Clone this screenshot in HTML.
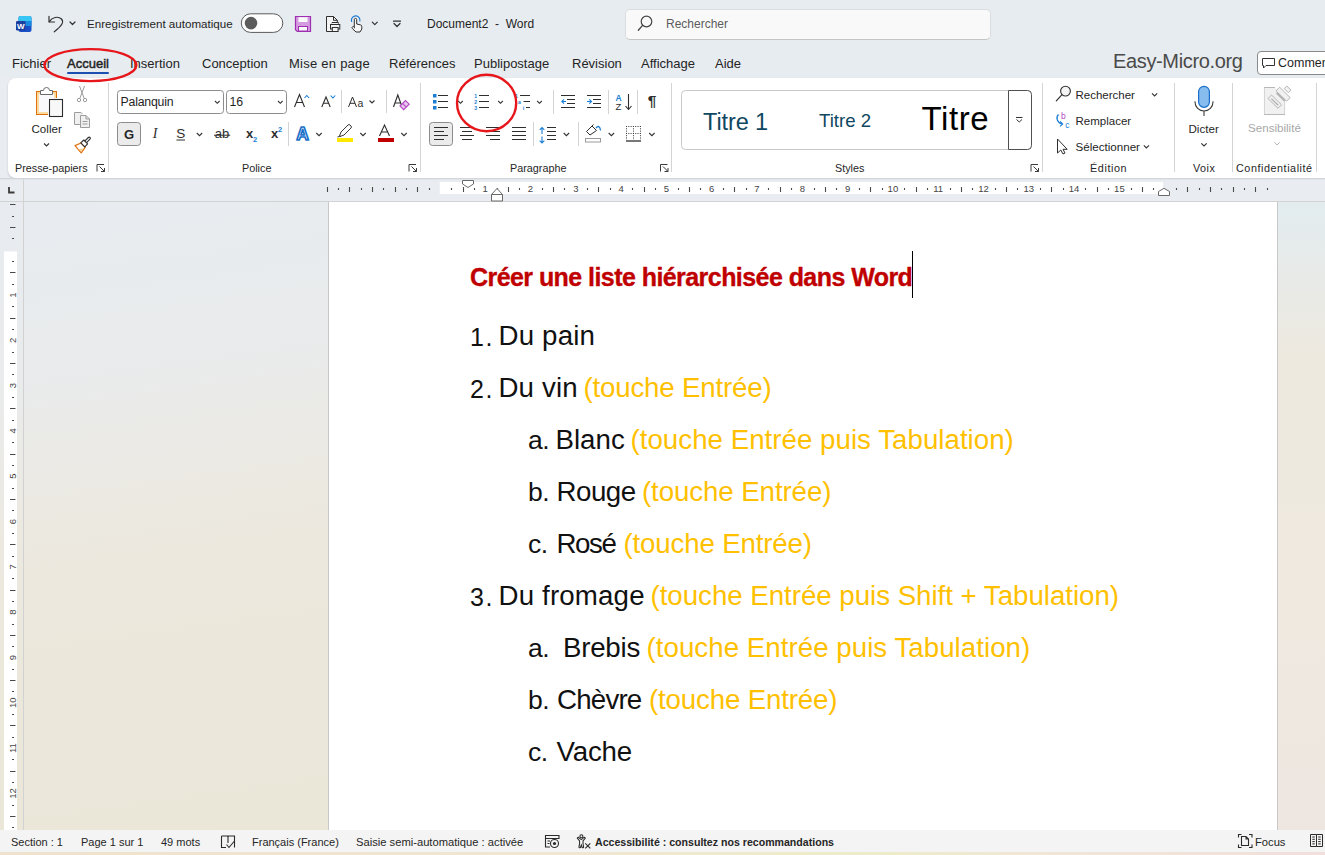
<!DOCTYPE html>
<html><head><meta charset="utf-8">
<style>
*{box-sizing:border-box;margin:0;padding:0}
html,body{width:1325px;height:855px;overflow:hidden;background:#e9edf2;font-family:"Liberation Sans",sans-serif;color:#1f1f1f}
.a{position:absolute;white-space:pre}
svg{position:absolute;overflow:visible}
#titlebar{position:absolute;left:0;top:0;width:1325px;height:78px;background:#e7ecf0}
#ribbon{position:absolute;left:8px;top:78px;width:1330px;height:100px;background:#fff;border-radius:8px;box-shadow:0 1px 2px rgba(0,0,0,.18)}
#ruler{position:absolute;left:0;top:178px;width:1325px;height:24px;background:#e9ecf0}
#doc{position:absolute;left:0;top:202px;width:1325px;height:628px;background:linear-gradient(172deg,#e8ecf0 0%,#e9ebec 22%,#ece9e1 40%,#ebe7da 60%,#e9e5d6 100%)}
#docr{position:absolute;left:1277px;top:202px;width:48px;height:628px;background:linear-gradient(180deg,#e2ecef 0%,#e8eae8 12%,#ede9df 25%,#efe9e0 60%,#eee7e1 100%)}
#page{position:absolute;left:328px;top:202px;width:950px;height:628px;background:#fff;border-left:1px solid #c8c8c8;border-right:1px solid #c8c8c8}
#status{position:absolute;left:0;top:830px;width:1325px;height:22px;background:#f4f4f4;font-size:11px;color:#262626}
#bottomstrip{position:absolute;left:0;top:852px;width:1325px;height:3px;background:linear-gradient(90deg,#efe2cc 0%,#efe7d0 45%,#eeecc8 65%,#f0e6d8 80%,#f1dfdc 100%)}
.tab{position:absolute;top:56px;font-size:13px;color:#242424}
.lbl{position:absolute;top:162px;font-size:10.8px;color:#262626}
.sep{position:absolute;width:1px;background:#d6d6d6}
.doc{position:absolute;font-size:27.7px;color:#111;white-space:pre;line-height:32px}
.or{color:#ffc000}
</style></head><body>
<div id="titlebar"></div>
<div id="ribbon"></div>
<div id="ruler"></div>
<div id="doc"></div>
<div id="docr"></div>
<div id="page"></div>
<div id="status"></div>
<div id="bottomstrip"></div>

<!-- ruler -->
<svg width="1325" height="855" style="left:0;top:0">
<rect x="439.7" y="182" width="723.4" height="12" fill="#fff"/>
<rect x="4" y="251.5" width="13" height="578.5" fill="#fff"/>
<path d="M0 201.5 H1325 M23.5 178 V830" stroke="#d2d2d2" stroke-width="1"/>
<rect x="0" y="178" width="1325" height="3" fill="url(#sh)"/>
<defs><linearGradient id="sh" x1="0" y1="0" x2="0" y2="1"><stop offset="0" stop-color="#c9ccd0"/><stop offset="1" stop-color="#e9ecf0" stop-opacity="0"/></linearGradient></defs>
<path d="M9 187 V192.5 H14.5" fill="none" stroke="#3a3a3a" stroke-width="1.8"/>
<path d="M327.5 187 V192 M338.5 188 V190 M349.5 187 V192 M361.5 188 V190 M372.5 187 V192 M383.5 188 V190 M395.5 187 V192 M406.5 188 V190 M417.5 187 V192 M429.5 188 V190 M451.5 188 V190 M463.5 187 V192 M474.5 188 V190 M497.5 188 V190 M508.5 187 V192 M519.5 188 V190 M542.5 188 V190 M553.5 187 V192 M564.5 188 V190 M587.5 188 V190 M598.5 187 V192 M610.5 188 V190 M632.5 188 V190 M644.5 187 V192 M655.5 188 V190 M678.5 188 V190 M689.5 187 V192 M700.5 188 V190 M723.5 188 V190 M734.5 187 V192 M746.5 188 V190 M768.5 188 V190 M780.5 187 V192 M791.5 188 V190 M814.5 188 V190 M825.5 187 V192 M836.5 188 V190 M859.5 188 V190 M870.5 187 V192 M882.5 188 V190 M904.5 188 V190 M916.5 187 V192 M927.5 188 V190 M950.5 188 V190 M961.5 187 V192 M972.5 188 V190 M995.5 188 V190 M1006.5 187 V192 M1017.5 188 V190 M1040.5 188 V190 M1051.5 187 V192 M1063.5 188 V190 M1085.5 188 V190 M1097.5 187 V192 M1108.5 188 V190 M1131.5 188 V190 M1142.5 187 V192 M1153.5 188 V190 M1176.5 188 V190 M1187.5 187 V192 M1199.5 188 V190 M1210.5 187 V192 M1221.5 188 V190 M1233.5 187 V192 M1244.5 188 V190 M1255.5 187 V192 M1267.5 188 V190" stroke="#4a4a4a" stroke-width="1.1"/>
<g font-family="Liberation Sans" font-size="9.5" fill="#454545"><text x="485.2" y="192" text-anchor="middle">1</text><text x="530.5" y="192" text-anchor="middle">2</text><text x="575.8" y="192" text-anchor="middle">3</text><text x="621.1" y="192" text-anchor="middle">4</text><text x="666.4" y="192" text-anchor="middle">5</text><text x="711.7" y="192" text-anchor="middle">6</text><text x="757.0" y="192" text-anchor="middle">7</text><text x="802.3" y="192" text-anchor="middle">8</text><text x="847.6" y="192" text-anchor="middle">9</text><text x="892.9" y="192" text-anchor="middle">10</text><text x="938.2" y="192" text-anchor="middle">11</text><text x="983.5" y="192" text-anchor="middle">12</text><text x="1028.8" y="192" text-anchor="middle">13</text><text x="1074.1" y="192" text-anchor="middle">14</text><text x="1119.4" y="192" text-anchor="middle">15</text></g>
<path d="M10 204.5 H15.5 M12 216.5 H14 M10 227.5 H15.5 M12 238.5 H14 M12 261.5 H14 M10 272.5 H15.5 M12 284.5 H14 M12 306.5 H14 M10 318.5 H15.5 M12 329.5 H14 M12 352.5 H14 M10 363.5 H15.5 M12 374.5 H14 M12 397.5 H14 M10 408.5 H15.5 M12 420.5 H14 M12 442.5 H14 M10 454.5 H15.5 M12 465.5 H14 M12 488.5 H14 M10 499.5 H15.5 M12 510.5 H14 M12 533.5 H14 M10 544.5 H15.5 M12 556.5 H14 M12 578.5 H14 M10 590.5 H15.5 M12 601.5 H14 M12 624.5 H14 M10 635.5 H15.5 M12 646.5 H14 M12 669.5 H14 M10 680.5 H15.5 M12 691.5 H14 M12 714.5 H14 M10 725.5 H15.5 M12 737.5 H14 M12 759.5 H14 M10 771.5 H15.5 M12 782.5 H14 M12 805.5 H14 M10 816.5 H15.5 M12 827.5 H14" stroke="#4a4a4a" stroke-width="1.1"/>
<g font-family="Liberation Sans" font-size="9.5" fill="#454545"><text transform="translate(16 295.0) rotate(-90)" x="0" y="0" text-anchor="middle">1</text><text transform="translate(16 340.3) rotate(-90)" x="0" y="0" text-anchor="middle">2</text><text transform="translate(16 385.6) rotate(-90)" x="0" y="0" text-anchor="middle">3</text><text transform="translate(16 430.9) rotate(-90)" x="0" y="0" text-anchor="middle">4</text><text transform="translate(16 476.2) rotate(-90)" x="0" y="0" text-anchor="middle">5</text><text transform="translate(16 521.6) rotate(-90)" x="0" y="0" text-anchor="middle">6</text><text transform="translate(16 566.9) rotate(-90)" x="0" y="0" text-anchor="middle">7</text><text transform="translate(16 612.2) rotate(-90)" x="0" y="0" text-anchor="middle">8</text><text transform="translate(16 657.5) rotate(-90)" x="0" y="0" text-anchor="middle">9</text><text transform="translate(16 702.8) rotate(-90)" x="0" y="0" text-anchor="middle">10</text><text transform="translate(16 748.1) rotate(-90)" x="0" y="0" text-anchor="middle">11</text><text transform="translate(16 793.4) rotate(-90)" x="0" y="0" text-anchor="middle">12</text></g>
<path d="M462.5 180.5 H473.5 V184 L468 187.5 L462.5 184 Z" fill="#fff" stroke="#6a6a6a" stroke-width="1"/>
<path d="M491.5 194.5 L497 188.5 L502.5 194.5 V201 H491.5 Z M491.5 194.5 H502.5" fill="#fff" stroke="#6a6a6a" stroke-width="1"/>
<path d="M1158.5 195.5 V191.5 L1164 188.3 L1169.5 191.5 V195.5 Z" fill="#fff" stroke="#6a6a6a" stroke-width="1"/>
</svg>
<!-- title bar text -->
<div class="a" style="left:87px;top:17px;font-size:11.6px;color:#1f1f1f">Enregistrement automatique</div>
<div class="a" style="left:427px;top:17px;font-size:12px;color:#1f1f1f">Document2  -  Word</div>
<div class="a" style="left:625px;top:9px;width:366px;height:31px;background:#f9f9f9;border:1px solid #dcdcdc;border-bottom-color:#c4c4c4;border-radius:5px"></div>
<div class="a" style="left:666px;top:17px;font-size:12px;color:#5c5c5c">Rechercher</div>

<!-- tabs -->
<div class="tab" style="left:12px">Fichier</div>
<div class="tab" style="left:67px;-webkit-text-stroke:0.45px #242424">Accueil</div>
<div class="a" style="left:67px;top:72px;width:42px;height:2px;background:#1b4fb0;border-radius:1px"></div>
<div class="tab" style="left:130px">Insertion</div>
<div class="tab" style="left:202px">Conception</div>
<div class="tab" style="left:289px;letter-spacing:0.25px">Mise en page</div>
<div class="tab" style="left:389px">Références</div>
<div class="tab" style="left:474px">Publipostage</div>
<div class="tab" style="left:572px">Révision</div>
<div class="tab" style="left:641px">Affichage</div>
<div class="tab" style="left:715px">Aide</div>
<div class="a" style="left:1113px;top:50px;font-size:20px;letter-spacing:-0.35px;color:#4a4a4a">Easy-Micro.org</div>
<div class="a" style="left:1257px;top:51px;width:80px;height:24px;background:#fff;border:1px solid #8a8a8a;border-radius:4px"></div>
<div class="a" style="left:1278px;top:56px;font-size:12.5px;color:#1f1f1f">Commentaires</div>

<!-- group labels -->
<div class="lbl" style="left:15px">Presse-papiers</div>
<div class="lbl" style="left:242px">Police</div>
<div class="lbl" style="left:510px">Paragraphe</div>
<div class="lbl" style="left:835px">Styles</div>
<div class="lbl" style="left:1090px;letter-spacing:0.6px">Édition</div>
<div class="lbl" style="left:1193px;letter-spacing:0.5px">Voix</div>
<div class="lbl" style="left:1236px;letter-spacing:0.55px">Confidentialité</div>


<svg width="1325" height="855" style="left:0;top:0">
<!-- word icon -->
<rect x="18.5" y="16" width="13" height="16" rx="2" fill="#1950c8"/>
<path d="M18.5 21 V18 a2 2 0 0 1 2 -2 H29.5 a2 2 0 0 1 2 2 V21 Z" fill="#37c6f4"/>
<rect x="18.5" y="21" width="13" height="5" fill="#1a8ae0"/>
<rect x="16" y="21" width="9.5" height="9.5" rx="1.3" fill="#1c3f9e"/>
<text x="20.7" y="28.6" font-family="Liberation Sans" font-weight="bold" font-size="8" fill="#fff" text-anchor="middle">W</text>
<!-- undo -->
<g fill="none" stroke="#303030" stroke-width="1.2" stroke-linecap="round" stroke-linejoin="round">
<path d="M49 16.3 V22 H54.5"/>
<path d="M49.4 21.6 C 52 17.3, 58 15.8, 61.5 19 C 64 21.8, 62.5 25.5, 54.3 31.8"/>
<path d="M70 22 L72.5 24.5 L75 22"/>
<path d="M372.3 22.2 L374.8 24.7 L377.3 22.2"/>
<path d="M393.5 21.2 H400.5 M394 23.5 L397 26.5 L400 23.5"/>
</g>
<!-- toggle -->
<rect x="241.3" y="13.8" width="41.5" height="18.6" rx="9.3" fill="#fff" stroke="#5a5a5a" stroke-width="1"/>
<circle cx="251" cy="23.1" r="6.3" fill="#5c5c5c"/>
<!-- save -->
<path d="M295.5 16.5 H310.5 V31.5 H297.3 L295.5 29.7 Z" fill="#d59be0" stroke="#9e2fb0" stroke-width="1.2"/>
<rect x="298.5" y="17.2" width="9" height="4.8" fill="#fafafa"/>
<rect x="298.5" y="26.5" width="9" height="4.5" fill="#fafafa" stroke="#9e2fb0" stroke-width="1"/>
<!-- print preview -->
<g fill="none" stroke="#2e2e2e" stroke-width="1">
<path d="M333 31.5 H326.5 V16.5 H333.5 L337.3 20.3 V23" fill="#f4f4f4"/>
<path d="M333.5 16.5 V20.3 H337.3"/>
<rect x="330.5" y="24.5" width="9.3" height="4.5" fill="#f4f4f4"/>
<rect x="332.3" y="22.5" width="5.8" height="2"/>
<rect x="332.3" y="27.5" width="5.8" height="4" fill="#f4f4f4"/>
</g>
<!-- touch -->
<path d="M351.8 22 A4.3 4.3 0 1 1 359.8 21.5" fill="none" stroke="#1a78d0" stroke-width="1.2"/>
<path d="M354.3 28.3 V19.6 a1.2 1.2 0 0 1 2.4 0 V24 l3.5 0.8 a1.8 1.8 0 0 1 1.6 2 V29 L360 32 H356 L352.3 28.5 a1 1 0 0 1 2 -1.5" fill="#f6f6f6" stroke="#303030" stroke-width="1"/>
<!-- search -->
<circle cx="646.5" cy="21.5" r="5.3" fill="none" stroke="#444" stroke-width="1.2"/>
<path d="M642.6 25.4 L638.3 30.3" stroke="#444" stroke-width="1.3" stroke-linecap="round"/>
</svg>


<svg width="1325" height="855" style="left:0;top:0">
<!-- separators -->
<g stroke="#d4d4d4" stroke-width="1">
<path d="M108.5 83 V172 M420.5 83 V172 M671.5 83 V172 M1042.5 83 V172 M1174.5 83 V172 M1232.5 83 V172 M1316.5 83 V172"/>
<path d="M341.5 90 V113 M386.5 90 V113 M288.5 122 V146 M553.5 90 V114 M608.5 90 V114 M637.5 90 V114 M533.5 122 V146 M578.5 122 V146"/>
</g>
<!-- launchers -->
<g fill="none" stroke="#3a3a3a" stroke-width="1">
<path d="M97 171.5 V164.5 H104 M99.5 166.5 L104.5 171.5 M101 171.5 H104.5 V168"/>
<path d="M409 171.5 V164.5 H416 M411.5 166.5 L416.5 171.5 M413 171.5 H416.5 V168"/>
<path d="M660.5 171.5 V164.5 H667.5 M663 166.5 L668 171.5 M664.5 171.5 H668 V168"/>
<path d="M1031 171.5 V164.5 H1038 M1033.5 166.5 L1038.5 171.5 M1035 171.5 H1038.5 V168"/>
</g>
<!-- paste -->
<rect x="36.6" y="91.6" width="19.8" height="22.8" fill="#f9f9fb" stroke="#e0700e" stroke-width="1.2"/>
<rect x="38" y="93" width="17" height="20" fill="none" stroke="#fcd68e" stroke-width="1.6"/>
<rect x="39" y="94" width="15" height="18" fill="#f9f9fb"/>
<path d="M40.5 94.5 V90.5 H43.5 A3 3 0 0 1 49.5 90.5 H52.5 V94.5 Z" fill="#fff" stroke="#6a6a6a"/>
<rect x="48" y="98" width="16" height="20" fill="#fff"/>
<rect x="49.5" y="99.5" width="13" height="17" fill="#f8f8f8" stroke="#2b2b2b" stroke-width="1.1"/>
<path d="M44 143.5 L46.5 146 L49 143.5" fill="none" stroke="#333" stroke-width="1.1"/>
<!-- scissors -->
<g fill="none" stroke="#9c9c9c" stroke-width="1">
<path d="M79.5 86 L84 98 M84.5 86 L80 98"/>
<circle cx="79" cy="100" r="1.7"/><circle cx="85" cy="100" r="1.7"/>
</g>
<!-- copy -->
<g fill="#f0f0f0" stroke="#9c9c9c" stroke-width="1">
<path d="M80.5 124.5 H74.5 V112.5 H81 L82.5 114"/>
<path d="M80.5 115.5 H86 L89.5 119 V127.5 H80.5 Z"/>
<path d="M86 115.5 V119 H89.5 M82.5 121.5 H87.5 M82.5 124 H87.5" fill="none"/>
</g>
<!-- format painter -->
<path d="M75 145.6 L81 143 L85.2 147.3 L81.2 152.8 Z" fill="#fff" stroke="#e0700e" stroke-width="1.2" stroke-linejoin="round"/>
<path d="M78.3 149.3 L83.6 148.2 L81.3 151.6 Z" fill="#fcd68e"/>
<path d="M85 142.5 L89.2 138.3" stroke="#2e2e2e" stroke-width="3.4" stroke-linecap="round"/>
<path d="M85 142.5 L89.2 138.3" stroke="#fff" stroke-width="1.2" stroke-linecap="round"/>
<path d="M80.8 142.8 L83.8 140 L87.6 143.8 L84.8 146.8 Z" fill="#fff" stroke="#2e2e2e" stroke-width="1.1" stroke-linejoin="round"/>
<!-- font boxes -->
<rect x="117.5" y="90.5" width="106" height="23" rx="3" fill="#fff" stroke="#8d8d8d"/>
<rect x="226.5" y="90.5" width="60" height="23" rx="3" fill="#fff" stroke="#8d8d8d"/>
<g fill="none" stroke="#333" stroke-width="1.1">
<path d="M215 101 L217.3 103.3 L219.6 101"/>
<path d="M278 101 L280.3 103.3 L282.6 101"/>
<path d="M369.5 100.5 L372 103 L374.5 100.5"/>
<path d="M196.8 133 L199.5 135.7 L202.2 133"/>
<path d="M316.3 133 L319 135.7 L321.7 133"/>
<path d="M360.3 133 L363 135.7 L365.7 133"/>
<path d="M401.3 133 L404 135.7 L406.7 133"/>
</g>
<text x="120.5" y="106" font-family="Liberation Sans" font-size="12.3" letter-spacing="-0.2" fill="#1f1f1f">Palanquin</text>
<text x="229.5" y="106" font-family="Liberation Sans" font-size="12.3" fill="#1f1f1f">16</text>
<!-- grow/shrink -->
<g fill="none" stroke="#2e2e2e" stroke-width="1.1">
<path d="M294.5 107 L299.5 94.5 L304.5 107 M296.3 102.5 H302.7"/>
<path d="M321.8 107 L326 97 L330.2 107 M323.4 103.3 H328.6"/>
</g>
<g fill="none" stroke="#1a7fd4" stroke-width="1.1">
<path d="M304.5 98 L306.8 95.5 L309.1 98"/>
<path d="M330.6 95.5 L332.9 98 L335.2 95.5"/>
</g>
<path d="M348.5 107 L352.5 97 L356.5 107 M350 103.3 H355" fill="none" stroke="#2e2e2e" stroke-width="1"/>
<text x="357.5" y="107" font-family="Liberation Sans" font-size="10.5" fill="#2e2e2e">a</text>
<path d="M393.5 107 L397.8 95 L402.1 107 M395 103 H400.6" fill="none" stroke="#2e2e2e" stroke-width="1.1"/>
<path d="M400 106 L405.5 100.5 L409.2 104.2 L403.7 109.7 Z M402.6 103.4 L406.3 107.1" fill="#e9c8ef" stroke="#b146c2" stroke-width="1.1"/>
<!-- G button -->
<rect x="117.5" y="122.5" width="23" height="23" rx="3" fill="#ebebeb" stroke="#8c8c8c"/>
<text x="129" y="139" font-family="Liberation Sans" font-weight="bold" font-size="13" fill="#262626" text-anchor="middle">G</text>
<text x="155" y="138.3" font-family="Liberation Serif" font-style="italic" font-size="14" fill="#2e2e2e" text-anchor="middle">I</text>
<text x="180.8" y="138.3" font-family="Liberation Sans" font-size="13.5" fill="#2e2e2e" text-anchor="middle">S</text>
<path d="M176.5 140 H185" stroke="#2e2e2e" stroke-width="1"/>
<text x="222" y="138.3" font-family="Liberation Sans" font-size="13" fill="#2e2e2e" text-anchor="middle">ab</text>
<path d="M214 135.2 H230.2" stroke="#2e2e2e" stroke-width="1"/>
<text x="249.5" y="138.3" font-family="Liberation Sans" font-weight="bold" font-size="13" fill="#2e2e2e" text-anchor="middle">x</text>
<text x="255" y="142.3" font-family="Liberation Sans" font-weight="bold" font-size="7.5" fill="#1a7fd4" text-anchor="middle">2</text>
<text x="274.5" y="138.3" font-family="Liberation Sans" font-weight="bold" font-size="13" fill="#2e2e2e" text-anchor="middle">x</text>
<text x="280" y="132.3" font-family="Liberation Sans" font-weight="bold" font-size="7.5" fill="#1a7fd4" text-anchor="middle">2</text>
<!-- text effects -->
<text x="302.6" y="140" font-family="Liberation Sans" font-weight="bold" font-size="17.5" fill="#dbeafa" stroke="#1a6fc9" stroke-width="1.6" stroke-linejoin="round" text-anchor="middle">A</text>
<!-- highlighter -->
<path d="M339.5 136 L341 132 L348 125 a1.4 1.4 0 0 1 2 0 L351 126 a1.4 1.4 0 0 1 0 2 L344 135 L340 136.5 Z" fill="#fff" stroke="#3a3a3a" stroke-width="1"/>
<path d="M337.5 137 L340.5 136" stroke="#3a3a3a" stroke-width="1"/>
<rect x="337" y="138" width="16" height="4" fill="#ffe800"/>
<!-- font color -->
<path d="M379.5 136 L384.5 125 L389.5 136 M381.2 132 H387.8" fill="none" stroke="#2e2e2e" stroke-width="1.1"/>
<rect x="378" y="138" width="16" height="4" fill="#c00000"/>
</svg>


<svg width="1325" height="855" style="left:0;top:0">
<text x="31.5" y="132.8" font-family="Liberation Sans" font-size="11.6" fill="#262626">Coller</text>
<!-- bullets -->
<g fill="#1a7fd4">
<rect x="433" y="94" width="3.5" height="3.5"/><rect x="433" y="100" width="3.5" height="3.5"/><rect x="433" y="106" width="3.5" height="3.5"/>
</g>
<g stroke="#2e2e2e" stroke-width="1" fill="none">
<path d="M438 95.5 H448 M438 101.5 H448 M438 107.5 H448"/>
<path d="M479 95.5 H489 M479 101.5 H489 M479 107.5 H489"/>
<path d="M520 95.5 H530 M523.5 101.5 H530 M526 107.5 H530"/>
<path d="M561 95.5 H575 M567 99.5 H575 M567 103.5 H575 M561 107.5 H575"/>
<path d="M587 95.5 H601 M593 99.5 H601 M593 103.5 H601 M587 107.5 H601"/>
<path d="M434 127.5 H448 M434 131.5 H444 M434 135.5 H448 M434 139.5 H444" />
<path d="M460 127.5 H474 M462 131.5 H472 M460 135.5 H474 M462 139.5 H472"/>
<path d="M486 127.5 H500 M490 131.5 H500 M486 135.5 H500 M490 139.5 H500"/>
<path d="M512 127.5 H526 M512 131.5 H526 M512 135.5 H526 M512 139.5 H526"/>
<path d="M547 127.5 H556 M547 131.5 H556 M547 135.5 H556 M547 139.5 H556"/>
</g>
<g fill="none" stroke="#333" stroke-width="1.1">
<path d="M458.2 101 L460.5 103.3 L462.8 101"/>
<path d="M498.2 101 L500.5 103.3 L502.8 101"/>
<path d="M537.2 101 L539.5 103.3 L541.8 101"/>
<path d="M563.7 133 L566.4 135.7 L569.1 133"/>
<path d="M608.7 133 L611.4 135.7 L614.1 133"/>
<path d="M649.2 133 L651.9 135.7 L654.6 133"/>
<path d="M1152 93.3 L1154.6 95.9 L1157.2 93.3"/>
<path d="M1143.8 145.3 L1146.4 147.9 L1149 145.3"/>
<path d="M1201.3 143.3 L1204 146 L1206.7 143.3"/>
</g>
<g font-family="Liberation Sans" font-weight="bold" font-size="5.2" fill="#1a7fd4" text-anchor="middle">
<text x="475.6" y="98.3">1</text><text x="475.6" y="104.3">2</text><text x="475.6" y="110.3">3</text>
<text x="516.5" y="98.3">1</text><text x="519.5" y="104.3">a</text><text x="523.5" y="110.3">i</text>
</g>
<!-- indent arrows -->
<g fill="none" stroke="#1a7fd4" stroke-width="1.1">
<path d="M561.5 101.5 H566 M564 99.3 L561.8 101.5 L564 103.7"/>
<path d="M587 101.5 H591.5 M589.3 99.3 L591.5 101.5 L589.3 103.7"/>
<path d="M542 127.5 V134 M539.7 129.8 L542 127.5 L544.3 129.8 M542 136.5 V143 M539.7 140.7 L542 143 L544.3 140.7"/>
</g>
<!-- sort -->
<text x="618.5" y="101" font-family="Liberation Sans" font-weight="bold" font-size="8.5" fill="#1a7fd4" text-anchor="middle">A</text>
<text x="618.5" y="110" font-family="Liberation Sans" font-size="9.5" fill="#2e2e2e" text-anchor="middle">Z</text>
<path d="M628.5 94 V109.5 M625.5 106 L628.5 109.5 L631.5 106" fill="none" stroke="#2e2e2e" stroke-width="1.1"/>
<!-- pilcrow -->
<text x="652" y="106" font-family="Liberation Sans" font-weight="bold" font-size="15.5" fill="#2e2e2e" text-anchor="middle">¶</text>
<!-- align left button -->
<rect x="429.5" y="122.5" width="23" height="23" rx="3" fill="#ebebeb" stroke="#8c8c8c"/>
<path d="M434 127.5 H448 M434 131.5 H444 M434 135.5 H448 M434 139.5 H444" stroke="#2e2e2e" stroke-width="1"/>
<!-- shading -->
<path d="M590 135 L586.5 131.5 L592 126 L596.5 130.5 Z" fill="#fff" stroke="#2e2e2e" stroke-width="1"/>
<path d="M592 126 L593.5 124.5" stroke="#2e2e2e" stroke-width="1"/>
<path d="M596 128 C 598 125.5, 600 126, 600.5 130.5" fill="none" stroke="#1a7fd4" stroke-width="1.3"/>
<rect x="585.5" y="138.5" width="15" height="3.5" fill="#fff" stroke="#9a9a9a"/>
<!-- borders -->
<g stroke="#3a3a3a" stroke-width="1" stroke-dasharray="1 1.3" fill="none">
<path d="M626 126.5 H641 M626.5 126 V140 M640.5 126 V140 M633.5 126 V140 M626 133.5 H641"/>
</g>
<path d="M626 141 H641" stroke="#2e2e2e" stroke-width="1.3"/>
<!-- styles -->
<rect x="681.5" y="90.5" width="350" height="59" rx="4" fill="#fff" stroke="#c9c9c9"/>
<path d="M1008.5 90.5 H1027.5 a4 4 0 0 1 4 4 V145.5 a4 4 0 0 1 -4 4 H1008.5 Z" fill="#fff" stroke="#505050"/>
<path d="M1016 117.5 H1022.5 M1016.5 119.5 L1019.25 122 L1022 119.5" fill="none" stroke="#333" stroke-width="1"/>
<text x="703" y="129.8" font-family="Liberation Sans" font-size="23.5" letter-spacing="-0.1" fill="#0f4761">Titre 1</text>
<text x="819" y="127.2" font-family="Liberation Sans" font-size="18.6" letter-spacing="0" fill="#0f4761">Titre 2</text>
<text x="921.5" y="130" font-family="Liberation Sans" font-size="33" letter-spacing="0.6" fill="#000">Titre</text>
<!-- edition -->
<circle cx="1065.5" cy="91.1" r="4.9" fill="#f4f4f4" stroke="#2e2e2e" stroke-width="1.1"/>
<path d="M1061.8 94.8 L1056.3 100.8" stroke="#2e2e2e" stroke-width="1.2" stroke-linecap="round"/>
<text x="1075.5" y="98.9" font-family="Liberation Sans" font-size="11.5" fill="#262626">Rechercher</text>
<text x="1075.5" y="124.9" font-family="Liberation Sans" font-size="11.5" fill="#262626">Remplacer</text>
<text x="1075.5" y="150.5" font-family="Liberation Sans" font-size="11.6" fill="#262626">Sélectionner</text>
<text x="1063.3" y="119.3" font-family="Liberation Sans" font-size="8.5" fill="#b146c2" text-anchor="middle">b</text>
<text x="1067.3" y="128.3" font-family="Liberation Sans" font-size="8.5" fill="#1a7fd4" text-anchor="middle">c</text>
<path d="M1058.5 114.5 C 1055.5 117.5, 1057 123, 1062.5 124" fill="none" stroke="#1a7fd4" stroke-width="1.2"/>
<path d="M1060 121.5 L1062.6 124 L1060 126.3" fill="none" stroke="#1a7fd4" stroke-width="1.1"/>
<path d="M1057.5 139 V153 L1060.8 150 L1063 154 L1065 153 L1063 149.3 L1067.2 149.3 Z" fill="#fff" stroke="#2e2e2e" stroke-width="1" stroke-linejoin="round"/>
<!-- mic -->
<rect x="1198.6" y="86.3" width="10.8" height="21" rx="5.4" fill="#86bcee" stroke="#1a6fc9" stroke-width="1.2"/>
<path d="M1195 101.2 V102 A9 9 0 0 0 1213 102 V101.2 M1204 111 V116" fill="none" stroke="#3a3a3a" stroke-width="1.1"/>
<text x="1188.5" y="132.6" font-family="Liberation Sans" font-size="11.6" fill="#262626">Dicter</text>
<!-- sensibilite -->
<path d="M1275 87.5 H1264.5 V114.5 H1284.5 V102" fill="#f1f1f1" stroke="#b8b8b8" stroke-width="1.1"/>
<path d="M1264.5 88 H1275 L1284.5 98 V114 H1264.5 Z" fill="#f1f1f1"/>
<g fill="#f1f1f1" stroke="#b5b5b5" stroke-width="1">
<path d="M1268 98.5 L1271.5 95 L1281.5 104.8 L1278 108.3 Z"/>
<path d="M1276 90.8 L1279.6 87.2 L1290.2 97.6 L1286.6 101.2 Z"/>
<path d="M1284.2 88.6 L1286.8 86 L1291 90.2 L1288.4 92.8 Z"/>
</g>
<path d="M1271.3 98.6 L1278.2 105.3" stroke="#b0b0b0" stroke-width="1.3"/>
<path d="M1276.6 92.8 L1285 101" stroke="#b0b0b0" stroke-width="1.8"/>
<text x="1248" y="132" font-family="Liberation Sans" font-size="11.6" fill="#a8a8a8">Sensibilité</text>
<path d="M1274.3 142.3 L1277 145 L1279.7 142.3" fill="none" stroke="#b8b8b8" stroke-width="1"/>
<!-- commentaires icon -->
<path d="M1262.5 58.5 H1274.5 V65.5 H1266 L1263.5 68 V65.5 H1262.5 Z" fill="none" stroke="#333" stroke-width="1"/>
<!-- red annotations -->
<ellipse cx="90.4" cy="65.1" rx="46" ry="16" fill="none" stroke="#e6161b" stroke-width="2.4"/>
<ellipse cx="486.6" cy="103" rx="29.6" ry="28.2" fill="none" stroke="#e6161b" stroke-width="2.4"/>
</svg>


<!-- status -->
<div class="a" style="left:11px;top:836px;font-size:11px;color:#262626">Section : 1</div>
<div class="a" style="left:81px;top:836px;font-size:11px;color:#262626">Page 1 sur 1</div>
<div class="a" style="left:161px;top:836px;font-size:11px;color:#262626">49 mots</div>
<div class="a" style="left:252px;top:836px;font-size:11px;color:#262626">Français (France)</div>
<div class="a" style="left:356px;top:836px;font-size:11.2px;color:#262626">Saisie semi-automatique : activée</div>
<div class="a" style="left:595px;top:836px;font-size:10.6px;font-weight:bold;color:#262626">Accessibilité : consultez nos recommandations</div>
<div class="a" style="left:1255px;top:836px;font-size:11.2px;color:#262626">Focus</div>
<svg width="1325" height="855" style="left:0;top:0">
<g fill="none" stroke="#2a2a2a" stroke-width="1.1">
<path d="M221.5 836 H227.5 L228 837 L228.5 836 H234.5 V847.5 M221.5 836 V847.5 H226 M228 837 V843"/>
<path d="M226.5 844.5 L229 847.5 L234 841.5"/>
<path d="M545.5 835.5 H559 V838.5 H545.5 Z M545.5 838.5 V847 H550 M547.5 841 H550 M547.5 843.5 H549.5"/>
<circle cx="554.5" cy="843.5" r="4"/>
<circle cx="581.4" cy="836.2" r="1.5"/>
<path d="M577.3 838.2 Q577.6 837 578.8 837.6 L581.3 839.6 L583.8 837.6 Q585 837 585.3 838.2 L583 841 V843.5 L583.6 847 Q583.3 848.2 582.2 847.6 L581.3 845 L580.4 847.6 Q579.3 848.2 579 847 L579.6 843.5 V841 Z" fill="#fff"/>
<path d="M585.3 843.3 L590.3 848.3 M590.3 843.3 L585.3 848.3"/>
<path d="M1238.5 837.5 V834.5 H1241.5 M1249 834.5 H1252 V837.5 M1238.5 844.5 V847.5 H1241.5 M1249 847.5 H1252 V844.5"/>
<path d="M1241.5 845.5 V836.5 H1246 L1248.5 839 V845.5 Z M1246 836.5 V839 H1248.5"/>
<path d="M1310.5 834.5 H1316.5 V846.5 H1310.5 Z M1316.5 834.5 H1322.5 V846.5 H1316.5 M1312.3 837 H1314.8 M1312.3 839.3 H1314.8 M1312.3 841.6 H1314.8 M1312.3 843.9 H1314.8 M1318.2 837 H1320.7 M1318.2 839.3 H1320.7 M1318.2 841.6 H1320.7 M1318.2 843.9 H1320.7" stroke-width="1"/>
</g>
<circle cx="554.5" cy="843.5" r="1.6" fill="#2a2a2a"/>
</svg>

<!-- document -->
<div class="doc" style="left:470px;top:261px;font-size:25px;letter-spacing:-0.56px;font-weight:bold;color:#c00000;-webkit-text-stroke:0.35px #c00000">Créer une liste hiérarchisée dans Word</div>
<div class="a" style="left:912px;top:251px;width:1px;height:47px;background:#000"></div>

<div class="doc" style="left:470px;top:321px;font-size:25px;letter-spacing:1.5px">1.</div>
<div class="doc" style="left:470px;top:373px;font-size:25px;letter-spacing:1.5px">2.</div>
<div class="doc" style="left:528px;top:424px;font-size:26.5px;letter-spacing:-0.6px">a.</div>
<div class="doc" style="left:528px;top:476px;font-size:26.5px;letter-spacing:-0.6px">b.</div>
<div class="doc" style="left:528px;top:528px;font-size:26.5px;letter-spacing:-0.6px">c.</div>
<div class="doc" style="left:470px;top:581px;font-size:25px;letter-spacing:1.5px">3.</div>
<div class="doc" style="left:528px;top:632px;font-size:26.5px;letter-spacing:-0.6px">a.</div>
<div class="doc" style="left:528px;top:684px;font-size:26.5px;letter-spacing:-0.6px">b.</div>
<div class="doc" style="left:528px;top:736px;font-size:26.5px;letter-spacing:-0.6px">c.</div>
<div class="doc" style="left:498.50px;top:320px;letter-spacing:0.167px">Du pain</div>
<div class="doc" style="left:498.50px;top:372px;letter-spacing:0.120px">Du vin</div>
<div class="doc or" style="left:583.50px;top:372px;letter-spacing:-0.186px">(touche Entrée)</div>
<div class="doc" style="left:555.50px;top:424px;letter-spacing:0.000px">Blanc</div>
<div class="doc or" style="left:630.50px;top:424px;letter-spacing:0.020px">(touche Entrée puis Tabulation)</div>
<div class="doc" style="left:556.50px;top:476px;letter-spacing:-0.500px">Rouge</div>
<div class="doc or" style="left:642.00px;top:476px;letter-spacing:-0.100px">(touche Entrée)</div>
<div class="doc" style="left:556.50px;top:528px;letter-spacing:-1.400px">Rosé</div>
<div class="doc or" style="left:623.50px;top:528px;letter-spacing:-0.171px">(touche Entrée)</div>
<div class="doc" style="left:498.50px;top:580px;letter-spacing:0.156px">Du fromage</div>
<div class="doc or" style="left:650.50px;top:580px;letter-spacing:-0.032px">(touche Entrée puis Shift + Tabulation)</div>
<div class="doc" style="left:563.00px;top:632px;letter-spacing:-0.240px">Brebis</div>
<div class="doc or" style="left:646.50px;top:632px;letter-spacing:0.033px">(touche Entrée puis Tabulation)</div>
<div class="doc" style="left:557.00px;top:684px;letter-spacing:-0.800px">Chèvre</div>
<div class="doc or" style="left:649.00px;top:684px;letter-spacing:-0.171px">(touche Entrée)</div>
<div class="doc" style="left:556.50px;top:736px;letter-spacing:-0.200px">Vache</div>

</body></html>
